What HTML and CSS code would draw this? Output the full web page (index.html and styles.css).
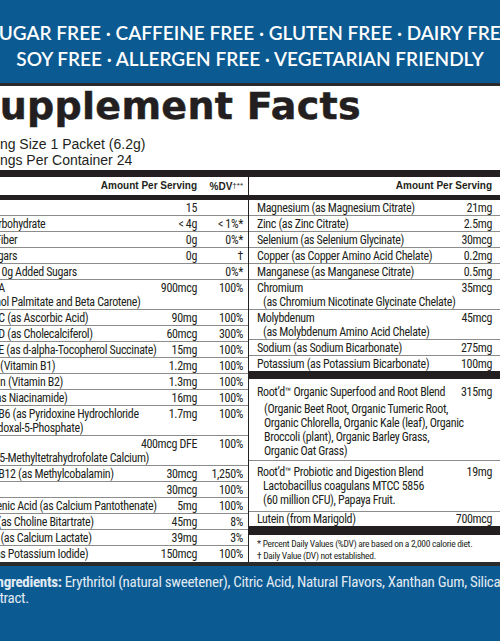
FILE: index.html
```html
<!DOCTYPE html>
<html lang="en">
<head>
    <meta charset="UTF-8">
    <meta name="viewport" content="width=device-width, initial-scale=1.0">
    <title>Supplement Facts</title>
    <link rel="stylesheet" href="styles.css">
</head>
<body>

<!-- Claims band -->
<div class="claims">
    <div class="claims-line">SUGAR FREE · CAFFEINE FREE · GLUTEN FREE · DAIRY FREE</div>
    <div class="claims-line">SOY FREE · ALLERGEN FREE · VEGETARIAN FRIENDLY</div>
</div>

<!-- Facts panel -->
<div class="label">
    <h1 class="title">Supplement Facts</h1>
    <div class="serving">Serving Size 1 Packet (6.2g)<br>Servings Per Container 24</div>

    <div class="facts">
        <div class="col col-left">
            <div class="head">
                <span class="name"></span>
                <span class="amt">Amount Per Serving</span>
                <span class="dv">%DV<span class="marks">†**</span></span>
            </div>
            <div class="row"><span class="name">Calories</span><span class="amt">15</span><span class="dv"></span></div>
            <div class="row"><span class="name">Total Carbohydrate</span><span class="amt">&lt; 4g</span><span class="dv">&lt; 1%*</span></div>
            <div class="row"><span class="name">Dietary Fiber</span><span class="amt">0g</span><span class="dv">0%*</span></div>
            <div class="row"><span class="name">Total Sugars</span><span class="amt">0g</span><span class="dv">†</span></div>
            <div class="row"><span class="name">Includes 0g Added Sugars</span><span class="amt"></span><span class="dv">0%*</span></div>
            <div class="row"><span class="name">Vitamin A<br>(as Retinol Palmitate and Beta Carotene)</span><span class="amt">900mcg</span><span class="dv">100%</span></div>
            <div class="row"><span class="name">Vitamin C (as Ascorbic Acid)</span><span class="amt">90mg</span><span class="dv">100%</span></div>
            <div class="row"><span class="name">Vitamin D (as Cholecalciferol)</span><span class="amt">60mcg</span><span class="dv">300%</span></div>
            <div class="row"><span class="name">Vitamin E (as d-alpha-Tocopherol Succinate)</span><span class="amt">15mg</span><span class="dv">100%</span></div>
            <div class="row"><span class="name">Thiamin (Vitamin B1)</span><span class="amt">1.2mg</span><span class="dv">100%</span></div>
            <div class="row"><span class="name">Riboflavin (Vitamin B2)</span><span class="amt">1.3mg</span><span class="dv">100%</span></div>
            <div class="row"><span class="name">Niacin (as Niacinamide)</span><span class="amt">16mg</span><span class="dv">100%</span></div>
            <div class="row"><span class="name">Vitamin B6 (as Pyridoxine Hydrochloride<br>and Pyridoxal-5-Phosphate)</span><span class="amt">1.7mg</span><span class="dv">100%</span></div>
            <div class="row"><span class="name">Folate<br>(as (6S)-5-Methyltetrahydrofolate Calcium)</span><span class="amt">400mcg DFE</span><span class="dv">100%</span></div>
            <div class="row"><span class="name">Vitamin B12 (as Methylcobalamin)</span><span class="amt">30mcg</span><span class="dv">1,250%</span></div>
            <div class="row"><span class="name">Biotin</span><span class="amt">30mcg</span><span class="dv">100%</span></div>
            <div class="row"><span class="name">Pantothenic Acid (as Calcium Pantothenate)</span><span class="amt">5mg</span><span class="dv">100%</span></div>
            <div class="row"><span class="name">Choline (as Choline Bitartrate)</span><span class="amt">45mg</span><span class="dv">8%</span></div>
            <div class="row"><span class="name">Calcium (as Calcium Lactate)</span><span class="amt">39mg</span><span class="dv">3%</span></div>
            <div class="row"><span class="name">Iodine (as Potassium Iodide)</span><span class="amt">150mcg</span><span class="dv">100%</span></div>
        </div>

        <div class="col col-right">
            <div class="head">
                <span class="name"></span>
                <span class="amt">Amount Per Serving</span>
            </div>
            <div class="row"><span class="name">Magnesium (as Magnesium Citrate)</span><span class="amt">21mg</span></div>
            <div class="row"><span class="name">Zinc (as Zinc Citrate)</span><span class="amt">2.5mg</span></div>
            <div class="row"><span class="name">Selenium (as Selenium Glycinate)</span><span class="amt">30mcg</span></div>
            <div class="row"><span class="name">Copper (as Copper Amino Acid Chelate)</span><span class="amt">0.2mg</span></div>
            <div class="row"><span class="name">Manganese (as Manganese Citrate)</span><span class="amt">0.5mg</span></div>
            <div class="row"><span class="name">Chromium<span class="sub">(as Chromium Nicotinate Glycinate Chelate)</span></span><span class="amt">35mcg</span></div>
            <div class="row"><span class="name">Molybdenum<span class="sub">(as Molybdenum Amino Acid Chelate)</span></span><span class="amt">45mcg</span></div>
            <div class="row"><span class="name">Sodium (as Sodium Bicarbonate)</span><span class="amt">275mg</span></div>
            <div class="row last"><span class="name">Potassium (as Potassium Bicarbonate)</span><span class="amt">100mg</span></div>

            <div class="row blend blend-first">
                <span class="name">Root’d™ Organic Superfood and Root Blend
                    <span class="sub wide first">(Organic Beet Root, Organic Tumeric Root,</span>
                    <span class="sub wide">Organic Chlorella, Organic Kale (leaf), Organic</span>
                    <span class="sub wide">Broccoli (plant), Organic Barley Grass,</span>
                    <span class="sub wide">Organic Oat Grass)</span>
                </span>
                <span class="amt">315mg</span>
            </div>
            <div class="row blend">
                <span class="name">Root’d™ Probiotic and Digestion Blend
                    <span class="sub">Lactobacillus coagulans MTCC 5856</span>
                    <span class="sub">(60 million CFU), Papaya Fruit.</span>
                </span>
                <span class="amt">19mg</span>
            </div>
            <div class="row lutein"><span class="name">Lutein (from Marigold)</span><span class="amt">700mcg</span></div>

            <div class="notes">
                * Percent Daily Values (%DV) are based on a 2,000 calorie diet.<br>
                † Daily Value (DV) not established.
            </div>
        </div>
    </div>
</div>

<p class="ingredients"><strong>Other Ingredients:</strong> Erythritol (natural sweetener), Citric Acid, Natural Flavors, Xanthan Gum, Silica, Stevia<br>Leaf Extract.</p>

</body>
</html>
```

FILE: styles.css
```css
* {
    box-sizing: border-box;
}
body {
    margin: 0;
    width: 500px;
    height: 641px;
    overflow: hidden;
    background: #0b5a92;
    font-family: "Liberation Sans", Arial, sans-serif;
    color: #231f20;
}
.claims {
    height: 83px;
    padding-top: 20px;
    color: #fff;
    font-family: Lato, "Open Sans", sans-serif;
    font-weight: 600;
    font-size: 19px;
    line-height: 26px;
}
.claims-line {
    display: flex;
    justify-content: center;
    white-space: nowrap;
}
.label {
    background: #fff;
    margin-left: -45px;
    width: 545px;
    border-top: 3px solid #2b2b2b;
    border-bottom: 4px solid #2b2b2b;
    border-left: 3px solid #2b2b2b;
}
.title {
    margin: 0;
    padding-left: 14px;
    font-family: "DejaVu Sans", sans-serif;
    font-weight: bold;
    font-size: 38px;
    letter-spacing: 0.3px;
    line-height: 40px;
    white-space: nowrap;
    -webkit-text-stroke: 0.5px #231f20;
}
.serving {
    margin: 10px 0 2px;
    padding-left: 10px;
    font-size: 14px;
    line-height: 16px;
}
.facts {
    display: flex;
    border-top: 7px solid #231f20;
}
.col {
    font-family: "Roboto Condensed", Roboto, sans-serif;
    font-stretch: condensed;
    font-size: 12px;
    letter-spacing: -0.35px;
    line-height: 14px;
}
.col-left {
    width: 291px;
    border-right: 1px solid #231f20;
}
.col-right {
    flex: 1;
    min-width: 0;
}
.head {
    display: flex;
    height: 23px;
    align-items: center;
    border-bottom: 5px solid #231f20;
    font-family: "Liberation Sans", Arial, sans-serif;
    font-stretch: normal;
    font-weight: bold;
    font-size: 10px;
    letter-spacing: 0;
}
.row {
    display: flex;
    align-items: flex-start;
    padding-top: 1px;
    border-bottom: 1px solid #8c8c8c;
}
.col-left .head,
.col-left .row {
    padding-left: 4px;
    padding-right: 5px;
}
.col-right .head,
.col-right .row {
    padding-left: 8px;
    padding-right: 8px;
}
.col-left .row:last-child,
.row.last {
    border-bottom: none;
}
.name {
    flex: 1;
    min-width: 0;
    white-space: nowrap;
}
.amt {
    text-align: right;
    white-space: nowrap;
}
.dv {
    width: 46px;
    flex-shrink: 0;
    text-align: right;
}
.marks {
    font-weight: normal;
    font-size: 8px;
    vertical-align: 2px;
}
.sub {
    display: block;
    padding-left: 6px;
}
.sub.wide {
    padding-left: 7px;
}
.sub.first {
    margin-top: 3px;
}
.blend {
    padding-top: 4px;
    padding-bottom: 4px;
}
.blend-first {
    border-top: 8px solid #231f20;
    padding-top: 6px;
    padding-bottom: 2px;
}
.lutein {
    padding-top: 0;
    border-bottom: 9px solid #231f20;
}
.notes {
    padding: 3px 8px 0;
    font-size: 9.5px;
    line-height: 12px;
    letter-spacing: -0.3px;
    white-space: nowrap;
}
.ingredients {
    margin: 0 0 0 -42px;
    padding-top: 8px;
    color: #e1eaf2;
    font-family: "Roboto Condensed", Roboto, sans-serif;
    font-stretch: condensed;
    font-size: 15px;
    letter-spacing: -0.3px;
    line-height: 16px;
    white-space: nowrap;
}
```
